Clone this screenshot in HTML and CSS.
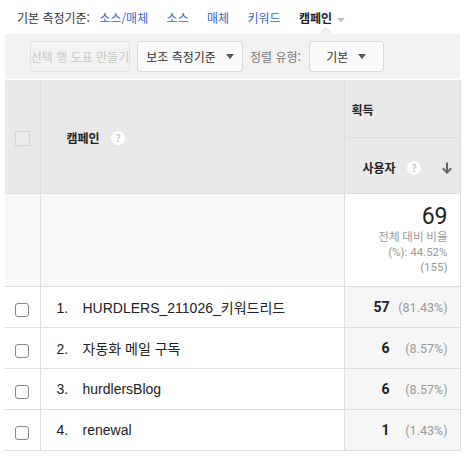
FILE: index.html
```html
<!DOCTYPE html>
<html lang="ko">
<head>
    <meta charset="UTF-8">
    <title>캠페인 보고서</title>
    <link rel="stylesheet" href="styles.css">
</head>
<body>
    <div class="report">
        <div class="dimension-bar">
            <span class="dim-label">기본 측정기준:</span>
            <a class="dim-link">소스/매체</a>
            <a class="dim-link">소스</a>
            <a class="dim-link">매체</a>
            <a class="dim-link">키워드</a>
            <span class="dim-active">캠페인 <span class="dim-caret"></span></span>
        </div>

        <div class="toolbar">
            <span class="notch"></span>
            <button class="tb-btn disabled">선택 행 도표 만들기</button>
            <button class="tb-btn select">보조 측정기준 <span class="arrow"></span></button>
            <span class="tb-label">정렬 유형:</span>
            <button class="tb-btn select sort">기본 <span class="arrow"></span></button>
        </div>

        <table class="data-table">
            <colgroup>
                <col class="col-check">
                <col class="col-name">
                <col class="col-metric">
            </colgroup>
            <thead>
                <tr>
                    <th rowspan="2" class="check-cell"><span class="box head-box"></span></th>
                    <th rowspan="2" class="name-head">캠페인 <span class="help">?</span></th>
                    <th class="group-head">획득</th>
                </tr>
                <tr>
                    <th class="metric-head">
                        사용자 <span class="help">?</span>
                        <svg class="sort-arrow" width="10" height="12" viewBox="0 0 10 12">
                            <path d="M5 0.5V10" stroke="#666" stroke-width="2"/>
                            <path d="M0.8 6.2L5 10.6L9.2 6.2" fill="none" stroke="#666" stroke-width="2"/>
                        </svg>
                    </th>
                </tr>
            </thead>
            <tbody>
                <tr class="totals">
                    <td></td>
                    <td></td>
                    <td class="total-cell">
                        <div class="total-num">69</div>
                        <div class="total-sub">전체 대비 비율<br>(%): 44.52%<br>(155)</div>
                    </td>
                </tr>
                <tr>
                    <td class="check-cell"><span class="box"></span></td>
                    <td class="name-cell"><span class="idx">1.</span>HURDLERS_211026_키워드리드</td>
                    <td class="value-cell"><b>57</b><span class="pct">(81.43%)</span></td>
                </tr>
                <tr>
                    <td class="check-cell"><span class="box"></span></td>
                    <td class="name-cell"><span class="idx">2.</span>자동화 메일 구독</td>
                    <td class="value-cell"><b>6</b><span class="pct">(8.57%)</span></td>
                </tr>
                <tr>
                    <td class="check-cell"><span class="box"></span></td>
                    <td class="name-cell"><span class="idx">3.</span>hurdlersBlog</td>
                    <td class="value-cell"><b>6</b><span class="pct">(8.57%)</span></td>
                </tr>
                <tr>
                    <td class="check-cell"><span class="box"></span></td>
                    <td class="name-cell"><span class="idx">4.</span>renewal</td>
                    <td class="value-cell"><b>1</b><span class="pct">(1.43%)</span></td>
                </tr>
            </tbody>
        </table>
    </div>
</body>
</html>
```

FILE: styles.css
```css
* {
    margin: 0;
    padding: 0;
    box-sizing: border-box;
}

body {
    background: #fff;
    font-family: 'Liberation Sans', 'Noto Sans CJK KR', sans-serif;
    color: #222;
}

.report {
    width: 455px;
    margin-left: 5px;
}

/* primary dimension links */
.dimension-bar {
    height: 34px;
    padding: 9px 0 0 12px;
    font-family: 'Noto Sans CJK KR', sans-serif;
    font-size: 12px;
    color: #333;
}

.dim-label {
    margin-right: 6px;
}

.dim-link {
    color: #3a66c4;
    margin-right: 15px;
}

.dim-active {
    font-weight: bold;
    color: #222;
}

.dim-caret {
    display: inline-block;
    width: 0;
    height: 0;
    border-left: 4px solid transparent;
    border-right: 4px solid transparent;
    border-top: 4px solid #bbb;
    vertical-align: middle;
    margin-left: 1px;
}

/* toolbar */
.toolbar {
    position: relative;
    height: 45px;
    background: #f2f2f2;
    display: flex;
    align-items: center;
    padding-left: 25px;
    font-family: 'Noto Sans CJK KR', sans-serif;
    font-size: 12px;
}

.notch {
    position: absolute;
    top: -5px;
    left: 316px;
    width: 9px;
    height: 9px;
    background: #f2f2f2;
    border-left: 1px solid #e2e2e2;
    border-top: 1px solid #e2e2e2;
    transform: rotate(45deg);
}

.tb-btn {
    height: 31px;
    border: 1px solid #d9d9d9;
    border-radius: 3px;
    background: #fafafa;
    font-family: inherit;
    font-size: 12px;
    color: #333;
    margin-right: 7px;
    display: flex;
    align-items: center;
    justify-content: center;
}

.tb-btn.disabled {
    width: 100px;
    color: #c8c8c8;
    background: #f3f3f3;
    border-color: #e0e0e0;
    white-space: nowrap;
    overflow: hidden;
}

.tb-btn.select {
    width: 106px;
}

.tb-btn.sort {
    width: 75px;
    margin-left: 8px;
}

.arrow {
    display: inline-block;
    width: 0;
    height: 0;
    border-left: 4px solid transparent;
    border-right: 4px solid transparent;
    border-top: 5px solid #555;
    margin-left: 10px;
}

.tb-label {
    color: #777;
}

/* report table */
.data-table {
    width: 455px;
    border-collapse: collapse;
    table-layout: fixed;
    margin-top: 1px;
    font-family: 'Noto Sans CJK KR', sans-serif;
}

.col-check {
    width: 35px;
}

.col-name {
    width: 304px;
}

.col-metric {
    width: 116px;
}

.data-table th,
.data-table td {
    border: 1px solid #dedede;
    border-top-color: #e4e4e4;
}

.data-table th {
    background: #e9e9e9;
    font-size: 12px;
    font-weight: bold;
    text-align: left;
    color: #222;
}

.data-table tr > :first-child {
    border-left: none;
}

.data-table .check-cell {
    text-align: center;
}

.box {
    display: inline-block;
    width: 14px;
    height: 14px;
    border: 1px solid #888;
    border-radius: 3px;
    background: #fff;
    vertical-align: middle;
}

.head-box {
    width: 15px;
    height: 15px;
    border-radius: 0;
    border-color: #d4d4d4;
    background: #ececec;
}

.name-head {
    padding-left: 26px;
}

.group-head {
    height: 57px;
    padding-left: 7px;
}

.metric-head {
    height: 56px;
    padding-left: 18px;
    padding-top: 4px;
}

.help {
    display: inline-block;
    width: 14px;
    height: 14px;
    border-radius: 50%;
    background: #fff;
    color: #c8c8c8;
    font-size: 10px;
    line-height: 14px;
    text-align: center;
    margin-left: 8px;
    vertical-align: 1px;
}

.sort-arrow {
    float: right;
    margin: 3px 8px 0 0;
}

.totals td {
    height: 93px;
    background: #f8f8f8;
}

.totals td.total-cell {
    background: #fff;
    text-align: right;
    padding-right: 12px;
    vertical-align: top;
    padding-top: 10px;
}

.total-num {
    font-family: Roboto, sans-serif;
    font-size: 23px;
    line-height: 26px;
    color: #222;
}

.total-sub {
    font-family: Roboto, 'Noto Sans CJK KR', sans-serif;
    font-size: 11.5px;
    line-height: 15px;
    color: #999;
}

.data-table tbody tr:not(.totals) td {
    height: 41px;
}

.name-cell {
    font-family: 'Liberation Sans', 'Noto Sans CJK KR', sans-serif;
    font-size: 14px;
    color: #222;
    padding-left: 16px;
}

.idx {
    display: inline-block;
    width: 26px;
}

.value-cell {
    background: #f6f6f6;
    text-align: right;
    padding-right: 12px;
    font-family: Roboto, sans-serif;
    font-size: 14px;
    white-space: nowrap;
}

.value-cell b {
    color: #222;
}

.pct {
    display: inline-block;
    width: 58px;
    text-align: right;
    color: #999;
    font-size: 12.5px;
}
```
